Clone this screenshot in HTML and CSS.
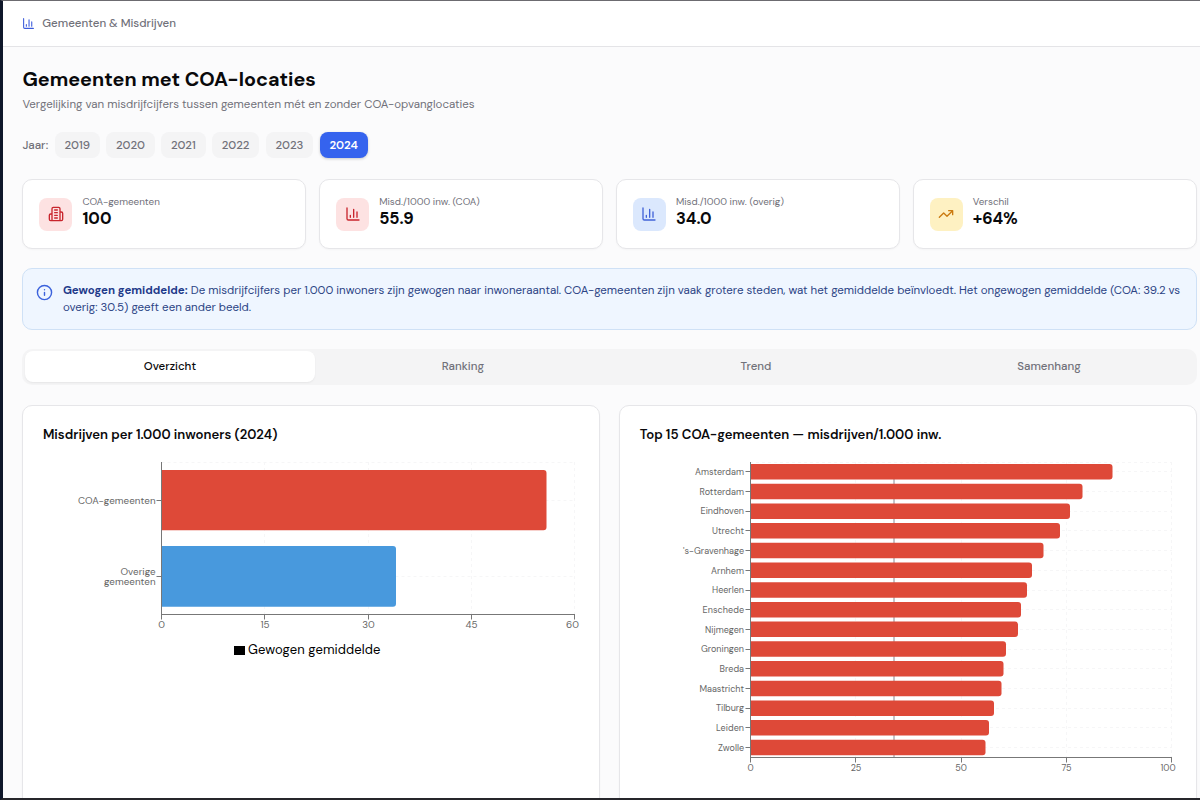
FILE: index.html
```html
<!DOCTYPE html>
<html lang="nl">
<head>
    <meta charset="utf-8">
    <title>Gemeenten &amp; Misdrijven</title>
    <link rel="stylesheet" href="styles.css">
</head>
<body>

<svg class="defs" width="0" height="0">
    <symbol id="i-chart" viewBox="0 0 24 24"><path d="M3 3v16a2 2 0 0 0 2 2h16M8 17v-3M13 17V5M18 17V9"/></symbol>
    <symbol id="i-building" viewBox="0 0 24 24"><path d="M6 22V4a2 2 0 0 1 2-2h8a2 2 0 0 1 2 2v18ZM6 12H4a2 2 0 0 0-2 2v6a2 2 0 0 0 2 2h2M18 9h2a2 2 0 0 1 2 2v9a2 2 0 0 1-2 2h-2M10 6h4M10 10h4M10 14h4M10 18h4"/></symbol>
    <symbol id="i-trend" viewBox="0 0 24 24"><path d="M22 7l-8.500 8.500-5-5L2 17M16 7h6v6"/></symbol>
    <symbol id="i-info" viewBox="0 0 24 24"><circle cx="12" cy="12" r="10"/><path d="M12 16v-4M12 8h.01"/></symbol>
</svg>

<div class="app">
    <header class="topbar">
        <svg class="icon"><use href="#i-chart"/></svg>
        <span>Gemeenten &amp; Misdrijven</span>
    </header>

    <main>
        <h1>Gemeenten met COA-locaties</h1>
        <p class="sub">Vergelijking van misdrijfcijfers tussen gemeenten mét en zonder COA-opvanglocaties</p>

        <div class="years">
            <span class="years-label">Jaar:</span>
            <button>2019</button>
            <button>2020</button>
            <button>2021</button>
            <button>2022</button>
            <button>2023</button>
            <button class="active">2024</button>
        </div>

        <div class="stats">
            <div class="card stat">
                <div class="badge red"><svg class="icon"><use href="#i-building"/></svg></div>
                <div><div class="label">COA-gemeenten</div><div class="value">100</div></div>
            </div>
            <div class="card stat">
                <div class="badge red"><svg class="icon"><use href="#i-chart"/></svg></div>
                <div><div class="label">Misd./1000 inw. (COA)</div><div class="value">55.9</div></div>
            </div>
            <div class="card stat">
                <div class="badge blue"><svg class="icon"><use href="#i-chart"/></svg></div>
                <div><div class="label">Misd./1000 inw. (overig)</div><div class="value">34.0</div></div>
            </div>
            <div class="card stat">
                <div class="badge amber"><svg class="icon"><use href="#i-trend"/></svg></div>
                <div><div class="label">Verschil</div><div class="value">+64%</div></div>
            </div>
        </div>

        <div class="notice">
            <svg class="icon"><use href="#i-info"/></svg>
            <p><b>Gewogen gemiddelde:</b> <span>De misdrijfcijfers per 1.000 inwoners zijn gewogen naar inwoneraantal. COA-gemeenten zijn vaak grotere steden, wat het gemiddelde beïnvloedt. Het ongewogen gemiddelde (COA: 39.2 vs<br>overig: 30.5) geeft een ander beeld.</span></p>
        </div>

        <div class="tabs">
            <div class="tab active">Overzicht</div>
            <div class="tab">Ranking</div>
            <div class="tab">Trend</div>
            <div class="tab">Samenhang</div>
        </div>

        <div class="charts">
            <div class="card chart">
                <h2>Misdrijven per 1.000 inwoners (2024)</h2>
                <svg class="plot" width="537" height="330">
                    <path class="grid" d="M118.500 6.500H531.500M118.500 44.500H531.500M118.500 120.500H531.500M221.500 6V158M325.500 6V158M428.500 6V158M531.500 6V158"/>
                    <path fill="#de4938" d="M118.500 14H500.500a3 3 0 0 1 3 3V71.300a3 3 0 0 1-3 3H118.500z"/>
                    <path fill="#4899dd" d="M118.500 90H350a3 3 0 0 1 3 3V147.700a3 3 0 0 1-3 3H118.500z"/>
                    <path class="axis" d="M118.500 6V163.500M118.500 158.500H532M221.500 158V163.500M325.500 158V163.500M428.500 158V163.500M531.500 158V163.500M113.500 44.500H118.500M113.500 120.500H118.500"/>
                    <g class="ticks end">
                        <text x="112.500" y="47.500" textLength="77.500">COA-gemeenten</text>
                        <text x="112.500" y="119" textLength="35">Overige</text>
                        <text x="112.500" y="129" textLength="51.500">gemeenten</text>
                    </g>
                    <g class="ticks mid">
                        <text x="118.500" y="172">0</text>
                        <text x="222" y="172">15</text>
                        <text x="325.500" y="172">30</text>
                        <text x="428.500" y="172">45</text>
                        <text x="529.500" y="172">60</text>
                    </g>
                    <rect x="191" y="190" width="11" height="9"/>
                    <text class="legend" x="205" y="198" textLength="132.500">Gewogen gemiddelde</text>
                </svg>
            </div>

            <div class="card chart">
                <h2>Top 15 COA-gemeenten — misdrijven/1.000 inw.</h2>
                <svg class="plot" width="537" height="330">
                    <path class="grid" d="M215.500 6V301M321.500 6V301M426.500 6V301M531.500 6V301M110 6.500H532"/>
                    <path class="grid" d="M110 15.500H532M110 35.500H532M110 55.500H532M110 74.500H532M110 94.500H532M110 114.500H532M110 134.500H532M110 153.500H532M110 173.500H532M110 193.500H532M110 212.500H532M110 232.500H532M110 252.500H532M110 271.500H532M110 291.500H532"/>
                    <path class="ref" d="M254 22V302"/>
                    <g class="bars">
                        <path d="M110.500 8H469.500a3 3 0 0 1 3 3v9.500a3 3 0 0 1-3 3H110.500z"/>
                        <path d="M110.500 27.700H439.500a3 3 0 0 1 3 3v9.500a3 3 0 0 1-3 3H110.500z"/>
                        <path d="M110.500 47.400H427a3 3 0 0 1 3 3v9.500a3 3 0 0 1-3 3H110.500z"/>
                        <path d="M110.500 67.100H417a3 3 0 0 1 3 3v9.500a3 3 0 0 1-3 3H110.500z"/>
                        <path d="M110.500 86.800H400.500a3 3 0 0 1 3 3v9.500a3 3 0 0 1-3 3H110.500z"/>
                        <path d="M110.500 106.500H389a3 3 0 0 1 3 3v9.500a3 3 0 0 1-3 3H110.500z"/>
                        <path d="M110.500 126.200H384a3 3 0 0 1 3 3v9.500a3 3 0 0 1-3 3H110.500z"/>
                        <path d="M110.500 145.900H378a3 3 0 0 1 3 3v9.500a3 3 0 0 1-3 3H110.500z"/>
                        <path d="M110.500 165.600H375a3 3 0 0 1 3 3v9.500a3 3 0 0 1-3 3H110.500z"/>
                        <path d="M110.500 185.300H363a3 3 0 0 1 3 3v9.500a3 3 0 0 1-3 3H110.500z"/>
                        <path d="M110.500 205H360.500a3 3 0 0 1 3 3v9.500a3 3 0 0 1-3 3H110.500z"/>
                        <path d="M110.500 224.700H358.500a3 3 0 0 1 3 3v9.500a3 3 0 0 1-3 3H110.500z"/>
                        <path d="M110.500 244.400H351a3 3 0 0 1 3 3v9.500a3 3 0 0 1-3 3H110.500z"/>
                        <path d="M110.500 264.100H346a3 3 0 0 1 3 3v9.500a3 3 0 0 1-3 3H110.500z"/>
                        <path d="M110.500 283.800H342.500a3 3 0 0 1 3 3v9.500a3 3 0 0 1-3 3H110.500z"/>
                    </g>
                    <path class="axis" d="M110.500 6V306.500M110.500 301.500H532M215.500 301V306.500M321.500 301V306.500M426.500 301V306.500M531.500 301V306.500"/>
                    <path class="axis" d="M105.500 15.500h5M105.500 35.500h5M105.500 55.500h5M105.500 74.500h5M105.500 94.500h5M105.500 114.500h5M105.500 134.500h5M105.500 153.500h5M105.500 173.500h5M105.500 193.500h5M105.500 212.500h5M105.500 232.500h5M105.500 252.500h5M105.500 271.500h5M105.500 291.500h5"/>
                    <g class="ticks end small">
                        <text x="104" y="19" textLength="49">Amsterdam</text>
                        <text x="104" y="38.700" textLength="44.500">Rotterdam</text>
                        <text x="104" y="58.400" textLength="43.500">Eindhoven</text>
                        <text x="104" y="78.100" textLength="32">Utrecht</text>
                        <text x="104" y="97.800" textLength="61">'s-Gravenhage</text>
                        <text x="104" y="117.500" textLength="33">Arnhem</text>
                        <text x="104" y="137.200" textLength="32">Heerlen</text>
                        <text x="104" y="156.900" textLength="41.500">Enschede</text>
                        <text x="104" y="176.600" textLength="39">Nijmegen</text>
                        <text x="104" y="196.300" textLength="43">Groningen</text>
                        <text x="104" y="216" textLength="24.500">Breda</text>
                        <text x="104" y="235.700" textLength="44.500">Maastricht</text>
                        <text x="104" y="255.400" textLength="28">Tilburg</text>
                        <text x="104" y="275.100" textLength="28">Leiden</text>
                        <text x="104" y="294.800" textLength="26">Zwolle</text>
                    </g>
                    <g class="ticks mid small">
                        <text x="110.500" y="315">0</text>
                        <text x="216" y="315">25</text>
                        <text x="321" y="315">50</text>
                        <text x="426.500" y="315">75</text>
                        <text x="528" y="315">100</text>
                    </g>
                </svg>
            </div>
        </div>
    </main>
</div>

</body>
</html>
```
FILE: styles.css
```css
* { box-sizing: border-box; margin: 0; padding: 0; }
body {
    height: 800px;
    overflow: hidden;
    background: #fbfbfc;
    color: #09090b;
    font-family: "DM Sans", Inter, "Liberation Sans", sans-serif;
    font-size: 11.5px;
}
.defs { position: absolute; }
.icon { fill: none; stroke: currentColor; stroke-width: 2; stroke-linecap: round; stroke-linejoin: round; flex: none; }

.app {
    height: 800px;
    overflow: hidden;
    border-left: 3px solid #0f172a;
    border-top: 1px solid #6c6b70;
    border-bottom: 2px solid #26262b;
}
.topbar {
    display: flex;
    align-items: center;
    gap: 7px;
    height: 46px;
    padding-left: 19.3px;
    background: #fff;
    border-bottom: 1px solid #e4e4e7;
    color: #71717a;
    font-weight: 500;
}
.topbar .icon { width: 13px; height: 13px; color: #3b5bdb; }
main { padding: 20px 3.5px 0 19.4px; }

h1 { font-size: 19.75px; line-height: 24px; font-weight: 700; }
.sub { margin-top: 5px; line-height: 17px; color: #71717a; }

/* year picker */
.years { display: flex; align-items: center; gap: 6.4px; height: 27px; margin-top: 18.5px; color: #71717a; font-weight: 500; }
.years button {
    height: 26px;
    padding: 0 9.85px;
    border: 0;
    border-radius: 8px;
    background: #f4f4f5;
    color: #71717a;
    font: inherit;
}
.years .active { background: #3563ee; color: #fff; font-weight: 600; box-shadow: 0 1px 3px rgba(0,0,0,.2); }

.card { background: #fff; border: 1px solid #e6e6e9; border-radius: 10px; box-shadow: 0 1px 2px rgba(0,0,0,.03); }
.stats { display: grid; grid-template-columns: repeat(4, 1fr); gap: 13px; margin-top: 20.5px; }
.stat { display: flex; align-items: center; gap: 10px; height: 70px; padding: 0 16px; }
.badge { display: flex; align-items: center; justify-content: center; width: 33px; height: 33px; border-radius: 8px; }
.badge .icon { width: 16px; height: 16px; }
.red { background: #fde2e2; color: #c9252d; }
.blue { background: #dbe8fd; color: #4263d8; }
.amber { background: #fef1c2; color: #cb7a10; }
.label { font-size: 9.9px; line-height: 13px; margin-top: -3px; color: #71717a; }
.value { font-size: 16.4px; line-height: 22px; font-weight: 700; }

.notice {
    display: flex;
    gap: 9.5px;
    height: 62px;
    margin-top: 19px;
    padding: 14px 13px;
    background: #eff6ff;
    border: 1px solid #cfe1f6;
    border-radius: 10px;
    color: #2c4485;
    line-height: 16.5px;
}
.notice .icon { width: 17px; height: 17px; margin-top: 1px; color: #3b62dc; }
.notice p { white-space: nowrap; }
.notice b { color: #1e3a8a; font-weight: 700; }

.tabs { display: grid; grid-template-columns: repeat(4, 1fr); gap: 3px; height: 36px; margin-top: 18.5px; padding: 2.5px; background: #f4f4f5; border-radius: 10px; }
.tab { display: flex; align-items: center; justify-content: center; border-radius: 8px; color: #71717a; font-weight: 500; }
.tab.active { background: #fff; color: #09090b; box-shadow: 0 1px 2px rgba(0,0,0,.06); }

.charts { display: grid; grid-template-columns: 1fr 1fr; gap: 19.5px; margin-top: 20.5px; }
.chart { height: 420px; padding: 19px 0 0 19.5px; }
.chart h2 { font-size: 13.15px; line-height: 20px; font-weight: 600; }
.plot { display: block; margin-top: 11px; }
.grid { fill: none; stroke: #f6f6f7; stroke-dasharray: 3 3; }
.axis { fill: none; stroke: #777; }
.ref { stroke: #8a8a94; stroke-width: 1; }
.bars { fill: #de4938; }
.ticks { fill: #666; font-size: 9.8px; }
.small { font-size: 9px; }
.end { text-anchor: end; }
.mid { text-anchor: middle; }
.legend { font-size: 13px; }
```
